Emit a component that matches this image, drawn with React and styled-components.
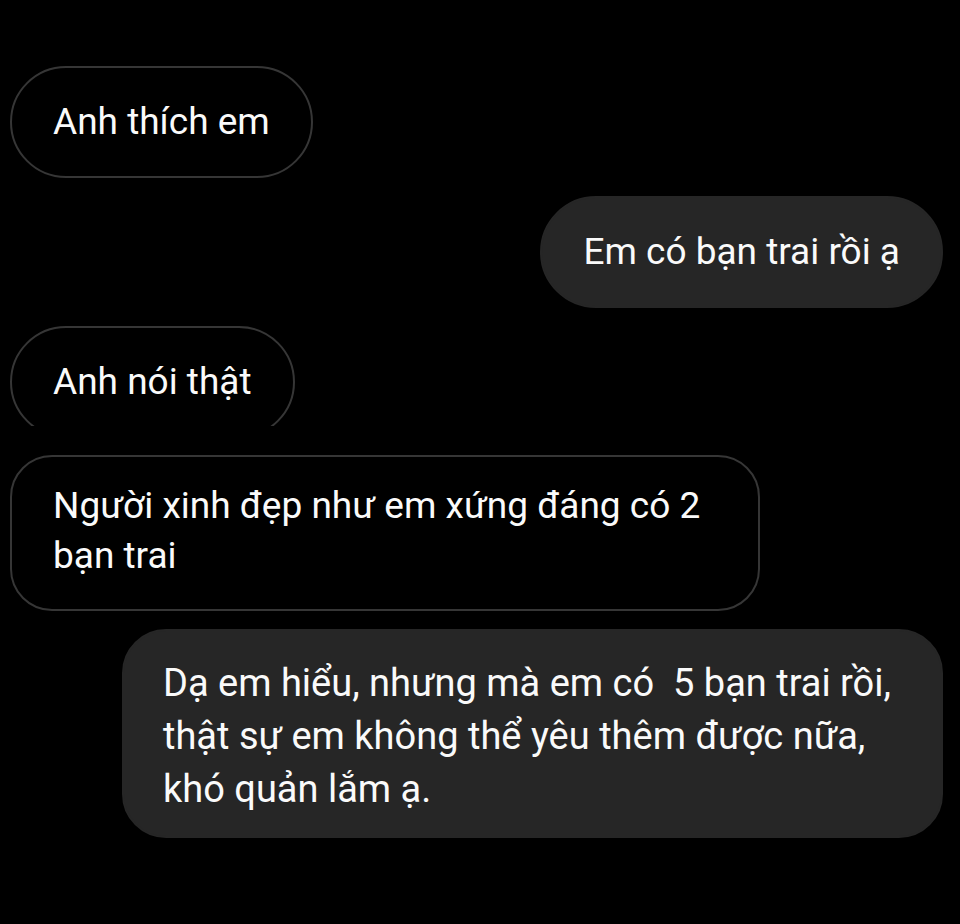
import React from "react";
import styled, { createGlobalStyle } from "styled-components";

const GlobalStyle = createGlobalStyle`
  html, body {
    margin: 0;
    background: #000;
  }
  body {
    font-family: Roboto, "Noto Sans", "Liberation Sans", sans-serif;
    -webkit-font-smoothing: antialiased;
  }
`;

const Thread = styled.div`
  display: flex;
  flex-direction: column;
  gap: 18px;
  width: 960px;
  height: 924px;
  box-sizing: border-box;
  padding: 66px 17px 0 10px;
  background: #000;
  overflow: hidden;
`;

const Bubble = styled.div`
  align-self: ${(p) => (p.$mine ? "flex-end" : "flex-start")};
  box-sizing: border-box;
  width: ${(p) => (p.$width ? `${p.$width}px` : "auto")};
  padding: ${(p) => p.$pad || "29px 41px"};
  border-radius: ${(p) => p.$radius || 56}px;
  border: 2px solid ${(p) => (p.$mine ? "#262626" : "#363636")};
  background: ${(p) => (p.$mine ? "#262626" : "#000")};
  color: #fafafa;
  font-size: ${(p) => p.$size || 37}px;
  line-height: ${(p) => p.$lh || 50}px;
  white-space: pre-wrap;
`;

// the "Anh nói thật" bubble is cut off at the bottom in the screenshot
const Cropped = styled.div`
  align-self: flex-start;
  height: 100px;
  margin-bottom: 11px;
  overflow: hidden;
`;

export default function App() {
  return (
    <>
      <GlobalStyle />
      <Thread>
        <Bubble>Anh thích em</Bubble>
        <Bubble $mine>Em có bạn trai rồi ạ</Bubble>
        <Cropped>
          <Bubble>Anh nói thật</Bubble>
        </Cropped>
        <Bubble $width={750} $radius={42} $pad="24px 41px 28px">
          {"Người xinh đẹp như em xứng đáng có 2\nbạn trai"}
        </Bubble>
        <Bubble $mine $width={821} $radius={44} $pad="26px 39px 20px" $lh={53} $size={38}>
          {"Dạ em hiểu, nhưng mà em có  5 bạn trai rồi,\nthật sự em không thể yêu thêm được nữa,\nkhó quản lắm ạ."}
        </Bubble>
      </Thread>
    </>
  );
}
